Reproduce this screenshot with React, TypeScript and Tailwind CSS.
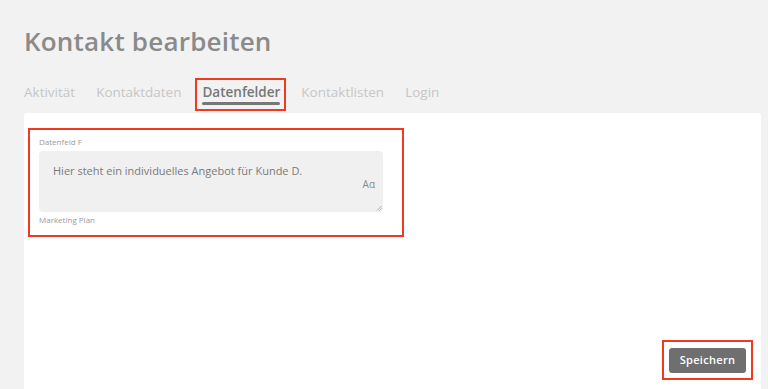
import React from 'react';

const tabs = ['Aktivität', 'Kontaktdaten', 'Datenfelder', 'Kontaktlisten', 'Login'];

export default function App() {
  return (
    <div className="h-[389px] overflow-hidden bg-[#f2f2f2] pl-6 pr-[7px] pt-[24px] font-['Open_Sans',sans-serif] flex flex-col">
      <h1 className="text-[26px] leading-[34px] font-semibold text-[#8a8a8a] tracking-[0.2px]">Kontakt bearbeiten</h1>

      <div className="mt-[19px] flex items-center gap-[21px] h-[32px]">
        {tabs.map((t) =>
          t === 'Datenfelder' ? (
            <div key={t} className="relative flex flex-col pt-[1px]">
              <span className="text-[13.5px] leading-[18px] font-semibold text-[#777777]">{t}</span>
              <div className="h-[3px] bg-[#777777] rounded-full mt-[1px]" />
              <div className="absolute -left-[7px] -right-[6px] -top-[4px] -bottom-[6px] border-2 border-[#f03a1e]" />
            </div>
          ) : (
            <span key={t} className="text-[13.5px] leading-[18px] text-[#c6c6c6] -mt-[2px]">{t}</span>
          )
        )}
      </div>

      <div className="mt-[4px] flex-1 bg-white rounded-t-[3px] flex flex-col">
        <div className="ml-[4px] mt-[15px] w-[376px] h-[109px] border-2 border-[#f03a1e] pl-[9px] pr-[19px] pt-[7px]">
          <div className="text-[8px] leading-[10px] text-[#9a9a9a]">Datenfeld F</div>
          <div className="relative mt-[4px] h-[61px] bg-[#f0f0f0] rounded-[4px] pl-[14px] pt-[12px]">
            <div className="text-[11px] leading-[16px] text-[#7a7a7a]">Hier steht ein individuelles Angebot für Kunde D.</div>
            <span className="absolute right-[8px] top-[26px] text-[10px] text-[#8a8a8a]">Aα</span>
            <svg className="absolute right-[1px] bottom-[1px]" width="6" height="6" viewBox="0 0 6 6">
              <path d="M5.5 1 L1 5.5 M5.5 3.5 L3.5 5.5" stroke="#9a9a9a" strokeWidth="0.8" />
            </svg>
          </div>
          <div className="mt-[3px] text-[8px] leading-[10px] text-[#9a9a9a]">Marketing Plan</div>
        </div>

        <div className="flex-1" />

        <div className="flex justify-end mr-[8px] mb-[9px]">
          <div className="border-2 border-[#f03a1e] w-[91px] h-[40px] flex items-center justify-center">
            <button className="w-[77px] h-[25px] rounded-[3px] bg-[#6f6f6f] text-white text-[11px] font-semibold tracking-[0.3px]">
              Speichern
            </button>
          </div>
        </div>
      </div>
    </div>
  );
}
